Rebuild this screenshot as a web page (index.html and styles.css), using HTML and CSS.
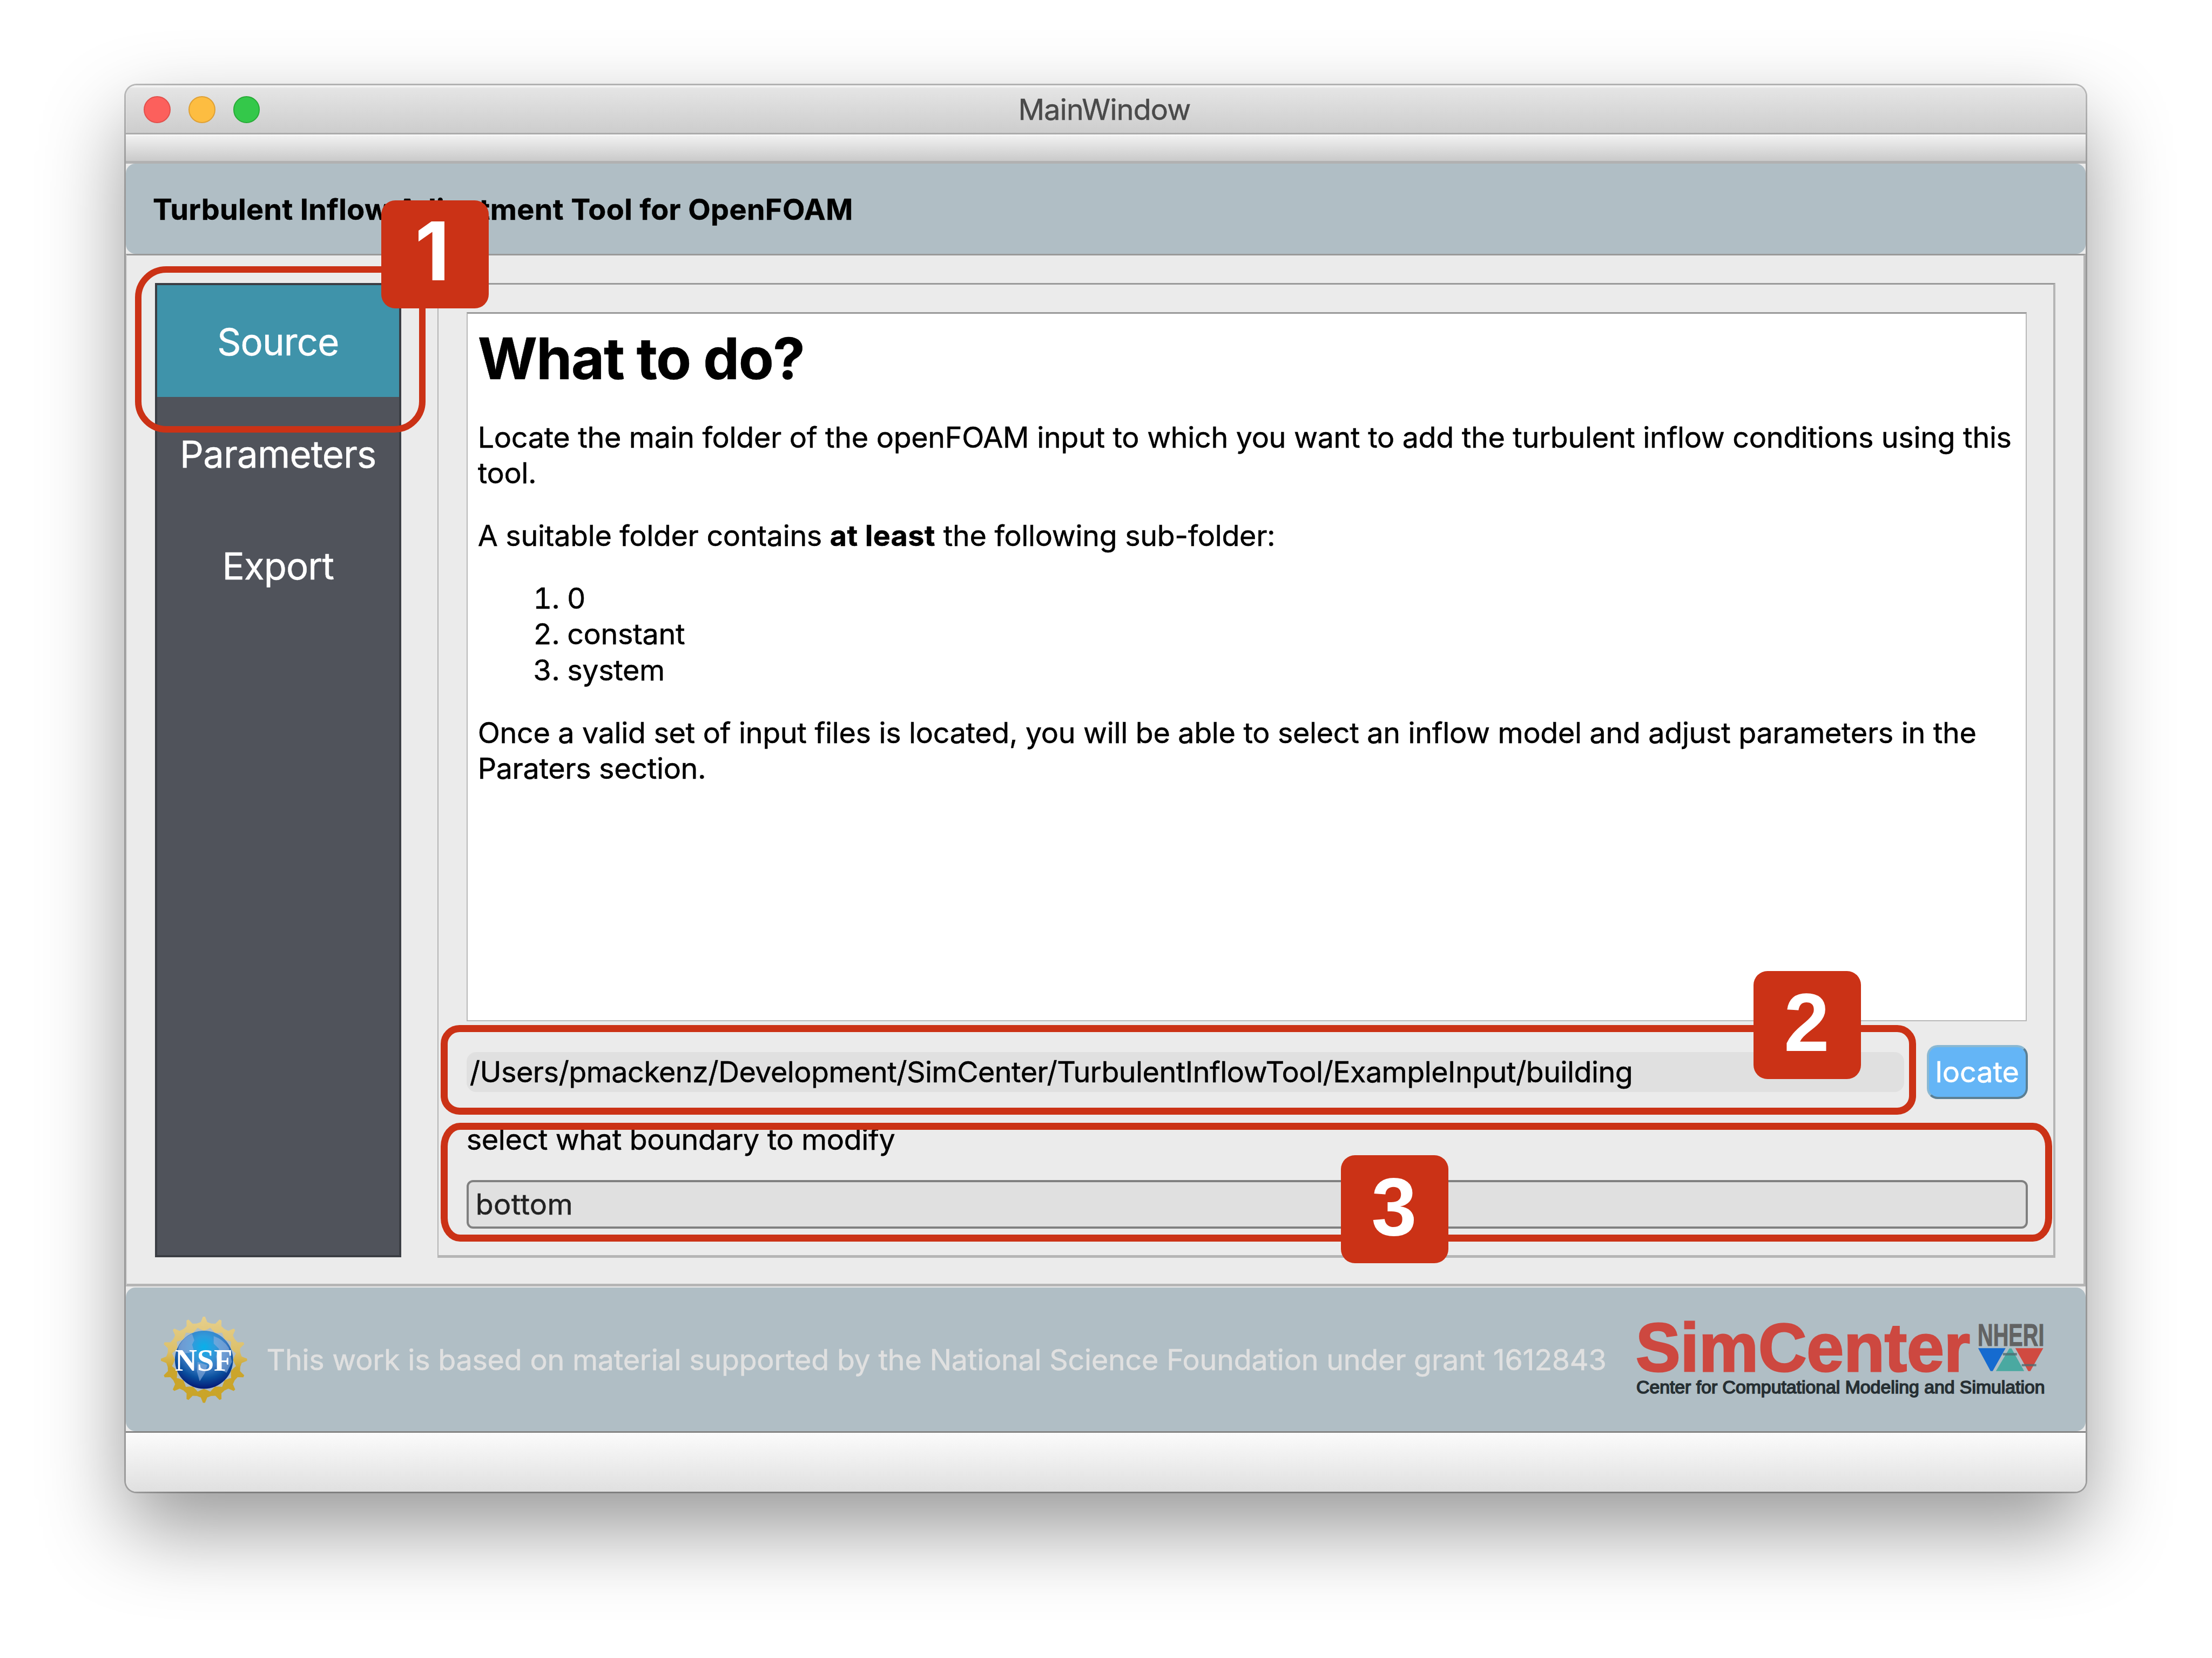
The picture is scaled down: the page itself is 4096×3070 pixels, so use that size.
FILE: index.html
```
<!DOCTYPE html>
<html lang="en">
<head>
<meta charset="utf-8">
<title>MainWindow</title>
<link rel="stylesheet" href="styles.css">
</head>
<body>
<div class="window">
  <div class="titlebar">
    <div class="lights"><i class="light close"></i><i class="light minimize"></i><i class="light zoom"></i></div>
    <div class="title">MainWindow</div>
  </div>
  <div class="toolbar"></div>
  <header class="header">Turbulent Inflow Adjustment Tool for OpenFOAM</header>
  <main class="main">
    <nav class="sidebar">
      <a class="item active">Source</a>
      <a class="item">Parameters</a>
      <a class="item">Export</a>
    </nav>
    <section class="group">
      <article class="help">
        <h1>What to do?</h1>
        <p>Locate the main folder of the openFOAM input to which you want to add the turbulent inflow conditions using this<br>tool.</p>
        <p>A suitable folder contains <b>at least</b> the following sub-folder:</p>
        <ol><li>0</li><li>constant</li><li>system</li></ol>
        <p>Once a valid set of input files is located, you will be able to select an inflow model and adjust parameters in the<br>Paraters section.</p>
      </article>
      <div class="path-row">
        <div class="path">/Users/pmackenz/Development/SimCenter/TurbulentInflowTool/ExampleInput/building</div>
        <div class="locate">locate</div>
      </div>
      <div class="label">select what boundary to modify</div>
      <div class="combo">bottom</div>
    </section>
  </main>
  <footer class="footer">
    <svg class="nsf" viewBox="-80 -80 160 160">
      <defs>
        <linearGradient id="gold" gradientUnits="userSpaceOnUse" x1="0" y1="-79" x2="0" y2="79">
          <stop offset="0" stop-color="#e6cf8c"/><stop offset=".4" stop-color="#dcc06a"/><stop offset=".6" stop-color="#cba52c"/><stop offset="1" stop-color="#c9a428"/>
        </linearGradient>
        <radialGradient id="globe" cx=".5" cy=".28" r=".75">
          <stop offset="0" stop-color="#08b0ea"/><stop offset=".25" stop-color="#2f9cdc"/><stop offset=".5" stop-color="#3b7cc4"/><stop offset=".72" stop-color="#0a4f9e"/><stop offset="1" stop-color="#04106e"/>
        </radialGradient>
      </defs>
      <path id="rays" fill="url(#gold)" d=""/>
      <circle r="54" fill="url(#globe)"/>
      <path fill="#8fb0de" opacity=".6" d="M-47-25Q-36-44-22-48L-18-36-22-28-18-14-34-12-49-14ZM18-44Q36-38 46-22L52 4 42 24 28 18 22-6 28-20 18-30ZM-12 4L6 10 2 24-8 40-13 22Z"/>
      <text class="nsf-text" x="-54" y="20" textLength="107" lengthAdjust="spacingAndGlyphs">NSF</text>
    </svg>
    <div class="grant">This work is based on material supported by the National Science Foundation under grant 1612843</div>
    <svg class="simcenter" viewBox="0 0 764 160">
      <text class="sim-name" x="2" y="101" textLength="621" lengthAdjust="spacingAndGlyphs">SimCenter</text>
      <text class="sim-tag" x="3" y="142.500" textLength="759" lengthAdjust="spacingAndGlyphs">Center for Computational Modeling and Simulation</text>
      <text class="sim-nheri" x="637" y="54.500" textLength="124" lengthAdjust="spacingAndGlyphs">NHERI</text>
      <path fill="#156bd0" d="M638 58.500H689L665 101H661Z"/>
      <path fill="#4aa9a1" d="M696 59H700L723.500 101H671Z"/>
      <path fill="#d04a41" d="M707 58.500H759L735 101H731Z"/>
      <path fill="#4d6b70" opacity=".8" d="M684 67.500H710V72H684ZM719 88H746V92H719Z"/>
    </svg>
  </footer>
  <div class="statusbar"></div>
</div>

<div class="mark mark-1"></div>
<div class="mark mark-2"></div>
<div class="mark mark-3"></div>
<div class="badge badge-1">1</div>
<div class="badge badge-2">2</div>
<div class="badge badge-3">3</div>
<script src="rays.js"></script>
</body>
</html>
```
FILE: rays.js
```
// Sixteen four-pointed stars around the globe of the NSF seal.
const star = [[80, -2], [80, 2], [70, 6], [66, 17], [62, 17], [57, 7], [54, 0], [57, -7], [62, -17], [66, -17], [70, -6]];
let d = '';
for (let i = 0; i < 16; i++) {
  const a = i * Math.PI / 8, c = Math.cos(a), s = Math.sin(a);
  d += 'M' + star.map(([x, y]) => (x * c - y * s).toFixed(1) + ' ' + (x * s + y * c).toFixed(1)).join('L') + 'Z';
}
document.getElementById('rays').setAttribute('d', d);
```
FILE: styles.css
```
/* 1rem is ten design pixels */
html { font-size: 9.96836px; }
* { box-sizing: border-box; }
body {
  margin: 0;
  padding: 15.8rem 0 0 23.4rem;
  height: 3070px;
  overflow: hidden;
  position: relative;
  background: #fff;
  color: #000;
  font-family: Inter, "Liberation Sans", sans-serif;
}
.window {
  width: 364rem;
  height: 261.3rem;
  display: flex;
  flex-direction: column;
  border-radius: 2rem;
  overflow: hidden;
  background: #ebebeb;
  font-size: 5.4rem;
  letter-spacing: -.03rem;
  white-space: nowrap;
  -webkit-text-stroke: .5px;
  box-shadow: 0 0 0 3px rgba(0, 0, 0, .25), 0 6.8rem 15.5rem rgba(0, 0, 0, .41);
}
.titlebar {
  height: 9.2rem;
  flex: none;
  display: grid;
  grid-template-columns: 1fr auto 1fr;
  align-items: center;
  padding: .2rem 3.5rem 0 3.3rem;
  background: linear-gradient(#e6e6e6, #cdcdcd);
  border-bottom: 3px solid #ababab;
  box-shadow: inset 0 .4rem .2rem #f3f3f3;
}
.lights { display: flex; gap: 3.3rem; }
.light { width: 5rem; height: 5rem; border-radius: 50%; border: 2px solid; }
.close { background: #fc605c; border-color: #e2504c; }
.minimize { background: #fdbd41; border-color: #dfa034; }
.zoom { background: #34c84a; border-color: #27ab36; }
.title { color: #4a4a4a; letter-spacing: -.08rem; margin-left: -.3rem; }
.toolbar {
  height: 5.4rem;
  flex: none;
  background: linear-gradient(#fff 0, #f0f0f0 .3rem, #cacaca);
  border-bottom: 5px solid #b1b1b1;
}
.header {
  height: 16.7rem;
  flex: none;
  display: flex;
  align-items: center;
  padding: .3rem 0 0 5rem;
  border-radius: 1.8rem;
  background: #b0bec5;
  font-weight: bold;
  letter-spacing: .045rem;
}
.main {
  height: 191.9rem;
  flex: none;
  display: flex;
  gap: 6.7rem;
  padding: 5.15rem 0 0 5.15rem;
  border: solid #b5b5b5;
  border-width: 3px 4px 5px 2px;
  border-top-color: #999;
  border-left-color: #ccc;
}
.sidebar {
  width: 45.8rem;
  height: 181rem;
  border: 4px solid #3b3e44;
  background: #50535b;
}
.item {
  height: 20.8rem;
  padding-top: .4rem;
  display: flex;
  align-items: center;
  justify-content: center;
  color: #fff;
  font-size: 6.9rem;
  letter-spacing: -.08rem;
}
.active { background: #3f93aa; }
.group {
  width: 300.6rem;
  height: 181.1rem;
  padding: 5.1rem 4.8rem 0 5.2rem;
  border: solid #b5b5b5;
  border-width: 3px 4px 5px 2px;
  border-top-color: #999;
}
.help {
  width: 289.8rem;
  height: 131.8rem;
  padding: 2rem 0 0 1.9rem;
  background: #fff;
  border: 2px solid #b8b8b8;
  border-top: 3px solid #999;
  line-height: 6.64rem;
  letter-spacing: -.032rem;
}
.help h1 { margin: 0; font-size: 10.66rem; line-height: 12.7rem; letter-spacing: -.16rem; }
.help p, .help ol { margin: 5rem 0 0; }
.help b { letter-spacing: .04rem; }
.help ol { padding-left: 16.6rem; }
.path-row { margin-top: 4.4rem; display: flex; align-items: center; justify-content: space-between; }
.path {
  width: 267.1rem;
  height: 7.5rem;
  line-height: 7.5rem;
  padding-left: .6rem;
  border-radius: 1.8rem;
  background: #e0e0e0;
  letter-spacing: -.053rem;
}
.locate {
  width: 18.7rem;
  height: 9.95rem;
  display: flex;
  align-items: center;
  justify-content: center;
  border: 4px solid;
  border-color: #8ab8d2 #5b7f93 #5b7f93 #8ab8d2;
  border-radius: 2rem;
  background: #64b5f6;
  color: #fff;
  letter-spacing: 0;
}
.label { margin-top: 4.25rem; line-height: 6.6rem; letter-spacing: -.038rem; }
.combo {
  margin-top: 4.2rem;
  height: 9.1rem;
  display: flex;
  align-items: center;
  padding-left: 1.3rem;
  border: 4px solid #808080;
  border-radius: 1.2rem;
  background: #e0e0e0;
  color: #222;
  letter-spacing: .04rem;
}
.footer {
  height: 26.6rem;
  flex: none;
  margin-top: .2rem;
  display: flex;
  align-items: center;
  padding: .2rem 7.3rem 0 6.5rem;
  border-radius: 1.8rem;
  background: #b0bec5;
}
.nsf { width: 16rem; height: 16rem; margin-right: 3.6rem; }
.nsf-text { font: bold 58px "Liberation Serif", serif; fill: #fff; letter-spacing: 0; }
.grant { color: #e0e0e0; letter-spacing: -.023rem; }
.simcenter { width: 76.4rem; height: 16rem; margin-left: auto; }
.simcenter text { font-family: "Liberation Sans", sans-serif; letter-spacing: 0; }
.sim-name { font-size: 126px; font-weight: bold; fill: #cd4840; stroke: #cd4840; stroke-width: 3; }
.sim-tag { font-size: 33px; fill: #262f33; stroke: #262f33; stroke-width: 1.6; }
.sim-nheri { font-size: 58px; font-weight: bold; fill: #626363; stroke: #626363; stroke-width: 1; }
.statusbar {
  flex: 1;
  border-top: 3px solid #858585;
  background: linear-gradient(#fbfbfb, #e0e0e0);
}

.mark { position: absolute; border: 13px solid #cb3216; }
.mark-1 { left: 25.1rem; top: 49.5rem; width: 54rem; height: 30.9rem; border-width: 12px; border-radius: 5.8rem; }
.mark-2 { left: 81.85rem; top: 190.4rem; width: 274.1rem; height: 16.7rem; border-radius: 3.5rem; }
.mark-3 { left: 81.85rem; top: 208.6rem; width: 299.4rem; height: 22rem; border-radius: 3.6rem / 4.4rem; }
.badge {
  position: absolute;
  width: 20rem;
  height: 20rem;
  border-radius: 2.6rem;
  background: #cb3216;
  color: #fff;
  font: bold 15.2rem/19.2rem "Liberation Sans", sans-serif;
  text-align: center;
}
.badge-1 { left: 70.8rem; top: 37.25rem; padding-right: 1rem; font: bold 15rem/18.8rem Inter, sans-serif; }
.badge-2 { left: 325.7rem; top: 180.4rem; padding-right: .2rem; }
.badge-3 { left: 249.05rem; top: 214.6rem; padding-right: .2rem; }
```
